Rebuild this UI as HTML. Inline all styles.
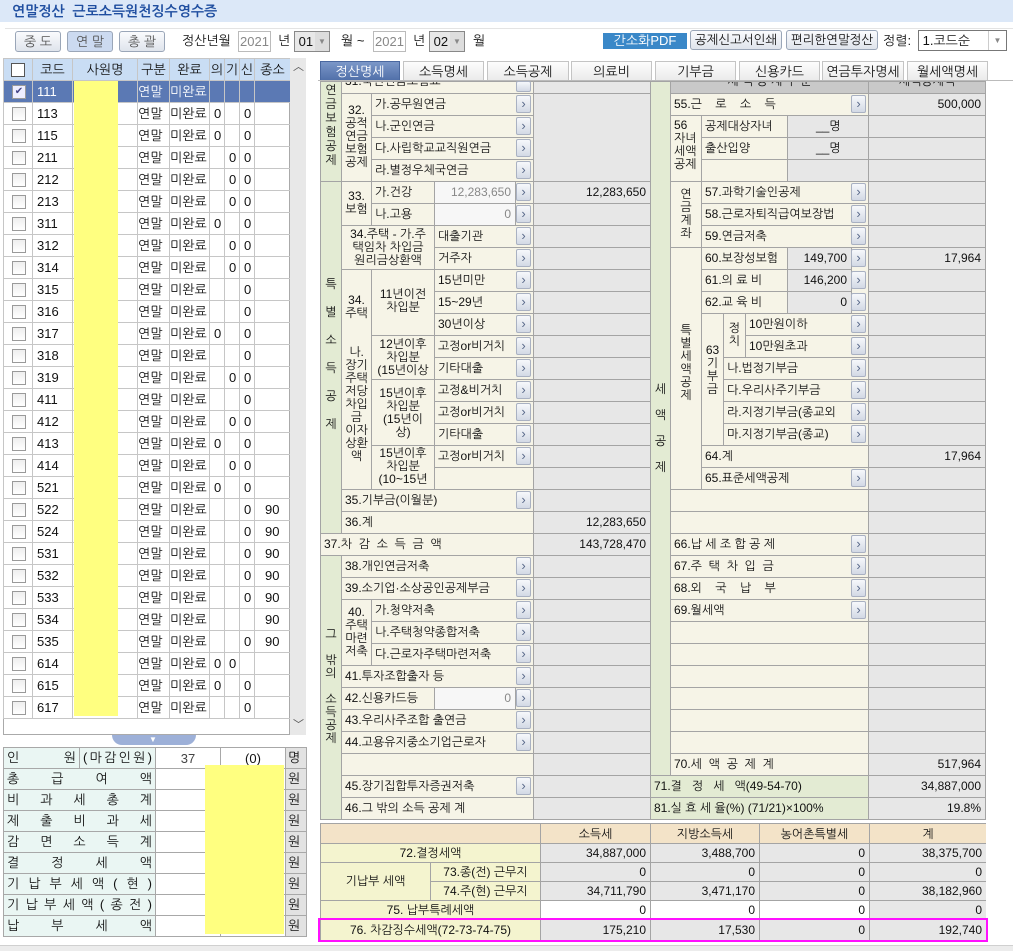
<!DOCTYPE html>
<html><head><meta charset="utf-8">
<style>
*{margin:0;padding:0}
body{width:1013px;height:950px;position:relative;overflow:hidden;background:#fff;font-family:"Liberation Sans","NanumGothic","Noto Sans CJK KR",sans-serif;font-size:12px;color:#111}
.a{position:absolute}
.c{position:absolute;box-sizing:border-box;border-left:1px solid #a4a4a4;border-top:1px solid #a4a4a4;overflow:hidden;white-space:nowrap;font-size:12px;line-height:20px;padding-left:3px}
.k{background:#f6f4e7}.g{background:#e7e7e7}.e{background:#e3ebd3}.w{background:#f7f7f7}.wh{background:#fff}
.r{text-align:right;padding-right:4px}
.v{line-height:13px;text-align:center;padding:0;white-space:normal}
.ct{text-align:center;padding:0}
.bt{position:absolute;width:15px;height:18px;box-sizing:border-box;border:1px solid #a9b1c2;border-radius:2px;background:linear-gradient(#f6f8fb,#d3d9e5);color:#5a6a8a;font-size:13px;line-height:16px;text-align:center}
.btn{position:absolute;box-sizing:border-box;border:1px solid #9aa6b8;border-radius:3px;background:linear-gradient(#fafbfd,#dfe4ec);text-align:center;font-size:13px;line-height:19px}
.tab{position:absolute;top:61px;height:20px;box-sizing:border-box;border:1px solid #c4c4c4;border-bottom:none;background:linear-gradient(#fdfdfd,#eaeaea);text-align:center;font-size:13px;line-height:19px}
table{border-collapse:collapse;table-layout:fixed}
.lg td{border:1px solid #c6c6c6;height:21px;font-size:13px;padding:0 0 0 4px;white-space:nowrap;overflow:hidden}
.cb{display:inline-block;width:12px;height:12px;border:1px solid #9a9a9a;background:linear-gradient(#eee,#fff);vertical-align:middle}
.sm td{border:1px solid #a8a8a8;height:20px;font-size:13px;padding:0 3px;white-space:nowrap}
.sp{display:flex;justify-content:space-between}
</style></head><body>
<!-- title -->
<div class="a" style="left:0;top:0;width:1013px;height:22px;background:#dce8f8"></div>
<div class="a" style="left:12px;top:3px;font-size:14px;font-weight:bold;color:#1f4ea0">연말정산 &nbsp;근로소득원천징수영수증</div>
<div class="a" style="left:5px;top:28px;width:1008px;height:1px;background:#e4e4e4"></div>
<!-- toolbar -->
<div class="btn" style="left:15px;top:31px;width:46px;height:21px;color:#555">중 도</div>
<div class="btn" style="left:67px;top:31px;width:46px;height:21px;background:#ccdaf0;color:#555">연 말</div>
<div class="btn" style="left:119px;top:31px;width:46px;height:21px;color:#555">총 괄</div>
<div class="a" style="left:182px;top:33px;font-size:13px">정산년월</div>
<div class="a" style="left:238px;top:31px;width:33px;height:21px;border:1px solid #bbb;box-sizing:border-box;color:#888;font-size:13px;line-height:19px;text-align:center">2021</div>
<div class="a" style="left:278px;top:33px;font-size:13px">년</div>
<div class="a" style="left:294px;top:31px;width:36px;height:21px;border:1px solid #888;box-sizing:border-box;background:#e8e8e8;font-size:13px;line-height:19px">&nbsp;01<span style="position:absolute;right:0;top:0;width:14px;height:19px;background:#ddd;color:#888;font-size:8px;text-align:center">▼</span></div>
<div class="a" style="left:341px;top:33px;font-size:13px">월 ~</div>
<div class="a" style="left:373px;top:31px;width:33px;height:21px;border:1px solid #bbb;box-sizing:border-box;color:#888;font-size:13px;line-height:19px;text-align:center">2021</div>
<div class="a" style="left:413px;top:33px;font-size:13px">년</div>
<div class="a" style="left:429px;top:31px;width:36px;height:21px;border:1px solid #888;box-sizing:border-box;background:#e8e8e8;font-size:13px;line-height:19px">&nbsp;02<span style="position:absolute;right:0;top:0;width:14px;height:19px;background:#ddd;color:#888;font-size:8px;text-align:center">▼</span></div>
<div class="a" style="left:473px;top:33px;font-size:13px">월</div>
<div class="a" style="left:603px;top:33px;width:84px;height:16px;background:#3a88c8;color:#fff;font-size:13px;line-height:16px;text-align:center">간소화PDF</div>
<div class="btn" style="left:690px;top:30px;width:92px;height:20px;font-size:12.5px;line-height:18px">공제신고서인쇄</div>
<div class="btn" style="left:786px;top:30px;width:92px;height:20px;font-size:12.5px;line-height:18px">편리한연말정산</div>
<div class="a" style="left:883px;top:33px;font-size:13px">정렬:</div>
<div class="a" style="left:918px;top:30px;width:89px;height:21px;border:1px solid #777;box-sizing:border-box;font-size:13px;line-height:19px;background:#fff">&nbsp;1.코드순<span style="position:absolute;right:0;top:0;width:17px;height:19px;border-left:1px solid #ccc;color:#888;font-size:8px;text-align:center">▼</span></div>

<!-- left grid -->
<div class="a" style="left:3px;top:58px;width:287px;height:677px;border:1px solid #aaa;box-sizing:border-box;background:#fff"></div>
<table class="a lg" style="left:3px;top:58px;width:287px">
<colgroup><col style="width:29px"><col style="width:40px"><col style="width:65px"><col style="width:32px"><col style="width:40px"><col style="width:15px"><col style="width:15px"><col style="width:15px"><col style="width:36px"></colgroup>
<tr style="background:#c9ddf4;text-align:center"><td style="padding:0"><span class="cb" style="background:#fff;border-color:#555"></span></td><td style="padding:0">코드</td><td style="padding:0">사원명</td><td style="padding:0">구분</td><td style="padding:0">완료</td><td style="padding:0">의</td><td style="padding:0">기</td><td style="padding:0">신</td><td style="padding:0">종소</td></tr>
<tr style="background:#5b79b4;color:#fff"><td style="padding:0 0 0 8px"><span class="cb" style="background:#eef;color:#448;font-size:10px;line-height:11px;text-align:center">✔</span></td><td>111</td><td style="padding:0"><div style="width:44px;height:21px;background:#ffff80;margin-left:1px"></div></td><td style="padding:0">연말</td><td style="padding:0">미완료</td><td></td><td></td><td></td><td></td></tr>
</table>
<div id="rows"></div>
<table class="a lg" style="left:3px;top:102px;width:287px">
<colgroup><col style="width:29px"><col style="width:40px"><col style="width:65px"><col style="width:32px"><col style="width:40px"><col style="width:15px"><col style="width:15px"><col style="width:15px"><col style="width:36px"></colgroup>
<tr><td style="padding-left:8px"><span class="cb"></span></td><td>113</td><td></td><td style="padding:0">연말</td><td style="padding:0">미완료</td><td>0</td><td></td><td>0</td><td></td></tr>
<tr><td style="padding-left:8px"><span class="cb"></span></td><td>115</td><td></td><td style="padding:0">연말</td><td style="padding:0">미완료</td><td>0</td><td></td><td>0</td><td></td></tr>
<tr><td style="padding-left:8px"><span class="cb"></span></td><td>211</td><td></td><td style="padding:0">연말</td><td style="padding:0">미완료</td><td></td><td>0</td><td>0</td><td></td></tr>
<tr><td style="padding-left:8px"><span class="cb"></span></td><td>212</td><td></td><td style="padding:0">연말</td><td style="padding:0">미완료</td><td></td><td>0</td><td>0</td><td></td></tr>
<tr><td style="padding-left:8px"><span class="cb"></span></td><td>213</td><td></td><td style="padding:0">연말</td><td style="padding:0">미완료</td><td></td><td>0</td><td>0</td><td></td></tr>
<tr><td style="padding-left:8px"><span class="cb"></span></td><td>311</td><td></td><td style="padding:0">연말</td><td style="padding:0">미완료</td><td>0</td><td></td><td>0</td><td></td></tr>
<tr><td style="padding-left:8px"><span class="cb"></span></td><td>312</td><td></td><td style="padding:0">연말</td><td style="padding:0">미완료</td><td></td><td>0</td><td>0</td><td></td></tr>
<tr><td style="padding-left:8px"><span class="cb"></span></td><td>314</td><td></td><td style="padding:0">연말</td><td style="padding:0">미완료</td><td></td><td>0</td><td>0</td><td></td></tr>
<tr><td style="padding-left:8px"><span class="cb"></span></td><td>315</td><td></td><td style="padding:0">연말</td><td style="padding:0">미완료</td><td></td><td></td><td>0</td><td></td></tr>
<tr><td style="padding-left:8px"><span class="cb"></span></td><td>316</td><td></td><td style="padding:0">연말</td><td style="padding:0">미완료</td><td></td><td></td><td>0</td><td></td></tr>
<tr><td style="padding-left:8px"><span class="cb"></span></td><td>317</td><td></td><td style="padding:0">연말</td><td style="padding:0">미완료</td><td>0</td><td></td><td>0</td><td></td></tr>
<tr><td style="padding-left:8px"><span class="cb"></span></td><td>318</td><td></td><td style="padding:0">연말</td><td style="padding:0">미완료</td><td></td><td></td><td>0</td><td></td></tr>
<tr><td style="padding-left:8px"><span class="cb"></span></td><td>319</td><td></td><td style="padding:0">연말</td><td style="padding:0">미완료</td><td></td><td>0</td><td>0</td><td></td></tr>
<tr><td style="padding-left:8px"><span class="cb"></span></td><td>411</td><td></td><td style="padding:0">연말</td><td style="padding:0">미완료</td><td></td><td></td><td>0</td><td></td></tr>
<tr><td style="padding-left:8px"><span class="cb"></span></td><td>412</td><td></td><td style="padding:0">연말</td><td style="padding:0">미완료</td><td></td><td>0</td><td>0</td><td></td></tr>
<tr><td style="padding-left:8px"><span class="cb"></span></td><td>413</td><td></td><td style="padding:0">연말</td><td style="padding:0">미완료</td><td>0</td><td></td><td>0</td><td></td></tr>
<tr><td style="padding-left:8px"><span class="cb"></span></td><td>414</td><td></td><td style="padding:0">연말</td><td style="padding:0">미완료</td><td></td><td>0</td><td>0</td><td></td></tr>
<tr><td style="padding-left:8px"><span class="cb"></span></td><td>521</td><td></td><td style="padding:0">연말</td><td style="padding:0">미완료</td><td>0</td><td></td><td>0</td><td></td></tr>
<tr><td style="padding-left:8px"><span class="cb"></span></td><td>522</td><td></td><td style="padding:0">연말</td><td style="padding:0">미완료</td><td></td><td></td><td>0</td><td style="padding-left:10px">90</td></tr>
<tr><td style="padding-left:8px"><span class="cb"></span></td><td>524</td><td></td><td style="padding:0">연말</td><td style="padding:0">미완료</td><td></td><td></td><td>0</td><td style="padding-left:10px">90</td></tr>
<tr><td style="padding-left:8px"><span class="cb"></span></td><td>531</td><td></td><td style="padding:0">연말</td><td style="padding:0">미완료</td><td></td><td></td><td>0</td><td style="padding-left:10px">90</td></tr>
<tr><td style="padding-left:8px"><span class="cb"></span></td><td>532</td><td></td><td style="padding:0">연말</td><td style="padding:0">미완료</td><td></td><td></td><td>0</td><td style="padding-left:10px">90</td></tr>
<tr><td style="padding-left:8px"><span class="cb"></span></td><td>533</td><td></td><td style="padding:0">연말</td><td style="padding:0">미완료</td><td></td><td></td><td>0</td><td style="padding-left:10px">90</td></tr>
<tr><td style="padding-left:8px"><span class="cb"></span></td><td>534</td><td></td><td style="padding:0">연말</td><td style="padding:0">미완료</td><td></td><td></td><td></td><td style="padding-left:10px">90</td></tr>
<tr><td style="padding-left:8px"><span class="cb"></span></td><td>535</td><td></td><td style="padding:0">연말</td><td style="padding:0">미완료</td><td></td><td></td><td>0</td><td style="padding-left:10px">90</td></tr>
<tr><td style="padding-left:8px"><span class="cb"></span></td><td>614</td><td></td><td style="padding:0">연말</td><td style="padding:0">미완료</td><td>0</td><td>0</td><td></td><td></td></tr>
<tr><td style="padding-left:8px"><span class="cb"></span></td><td>615</td><td></td><td style="padding:0">연말</td><td style="padding:0">미완료</td><td>0</td><td></td><td>0</td><td></td></tr>
<tr><td style="padding-left:8px"><span class="cb"></span></td><td>617</td><td></td><td style="padding:0">연말</td><td style="padding:0">미완료</td><td></td><td></td><td>0</td><td></td></tr>
</table>
<div class="a" style="left:74px;top:102px;width:44px;height:614px;background:#ffff80"></div>
<div class="a" style="left:290px;top:58px;width:16px;height:677px;background:#e8e8e8"></div>
<div class="a" style="left:293px;top:58px;font-size:11px;color:#555">︿</div>
<div class="a" style="left:293px;top:716px;font-size:11px;color:#555">﹀</div>
<div class="a" style="left:112px;top:735px;width:84px;height:10px;background:#9db0d8;border-radius:0 0 10px 10px"></div>
<div class="a" style="left:149px;top:735px;font-size:8px;color:#fff">▼</div>

<!-- summary -->
<table class="a sm" style="left:3px;top:747px;width:303px">
<colgroup><col style="width:76px"><col style="width:76px"><col style="width:65px"><col style="width:65px"><col style="width:21px"></colgroup>
<tr><td style="background:#eaf6f3"><div class="sp"><span>인</span><span>원</span></div></td><td style="background:#eaf6f3"><div class="sp"><span>(</span><span>마</span><span>감</span><span>인</span><span>원</span><span>)</span></div></td><td style="text-align:center;color:#444">37</td><td style="text-align:center">(0)</td><td style="background:#e2e2e2;padding:0 2px">명</td></tr>
<tr><td colspan="2" style="background:#eaf6f3"><div class="sp"><span>총</span><span>급</span><span>여</span><span>액</span></div></td><td></td><td></td><td style="background:#e2e2e2;padding:0 2px">원</td></tr>
<tr><td colspan="2" style="background:#eaf6f3"><div class="sp"><span>비</span><span>과</span><span>세</span><span>총</span><span>계</span></div></td><td></td><td></td><td style="background:#e2e2e2;padding:0 2px">원</td></tr>
<tr><td colspan="2" style="background:#eaf6f3"><div class="sp"><span>제</span><span>출</span><span>비</span><span>과</span><span>세</span></div></td><td></td><td></td><td style="background:#e2e2e2;padding:0 2px">원</td></tr>
<tr><td colspan="2" style="background:#eaf6f3"><div class="sp"><span>감</span><span>면</span><span>소</span><span>득</span><span>계</span></div></td><td></td><td></td><td style="background:#e2e2e2;padding:0 2px">원</td></tr>
<tr><td colspan="2" style="background:#eaf6f3"><div class="sp"><span>결</span><span>정</span><span>세</span><span>액</span></div></td><td></td><td></td><td style="background:#e2e2e2;padding:0 2px">원</td></tr>
<tr><td colspan="2" style="background:#eaf6f3"><div class="sp"><span>기</span><span>납</span><span>부</span><span>세</span><span>액</span><span>(</span><span>현</span><span>)</span></div></td><td></td><td></td><td style="background:#e2e2e2;padding:0 2px">원</td></tr>
<tr><td colspan="2" style="background:#eaf6f3"><div class="sp"><span>기</span><span>납</span><span>부</span><span>세</span><span>액</span><span>(</span><span>종</span><span>전</span><span>)</span></div></td><td></td><td></td><td style="background:#e2e2e2;padding:0 2px">원</td></tr>
<tr><td colspan="2" style="background:#eaf6f3"><div class="sp"><span>납</span><span>부</span><span>세</span><span>액</span></div></td><td></td><td></td><td style="background:#e2e2e2;padding:0 2px">원</td></tr>
</table>
<div class="a" style="left:205px;top:765px;width:79px;height:169px;background:#ffff80"></div>

<!-- tabs -->
<div class="tab" style="left:320px;width:80px;background:linear-gradient(#7b97c8,#4f6ea8);color:#fff;border-color:#4a68a0">정산명세</div>
<div class="tab" style="left:403px;width:81px">소득명세</div>
<div class="tab" style="left:487px;width:82px">소득공제</div>
<div class="tab" style="left:571px;width:81px">의료비</div>
<div class="tab" style="left:655px;width:81px">기부금</div>
<div class="tab" style="left:739px;width:81px">신용카드</div>
<div class="tab" style="left:822px;width:82px">연금투자명세</div>
<div class="tab" style="left:907px;width:81px">월세액명세</div>
<div class="a" style="left:318px;top:80px;width:695px;height:1px;background:#bbb"></div>

<!-- main form: frame -->
<div class="a" style="left:320px;top:81px;width:666px;height:739px;border-right:1px solid #a4a4a4;border-bottom:2px solid #a4a4a4;box-sizing:border-box"></div>

<!-- LEFT SIDE -->
<div class="c e v" style="left:320px;top:81px;width:21px;height:100px;line-height:14px;padding-top:1px">연<br>금<br>보<br>험<br>공<br>제</div>
<div class="c k" style="left:341px;top:81px;width:192px;height:12px"><div style="position:relative;top:-11px">31.국민연금보험료</div></div>
<div class="c g" style="left:533px;top:81px;width:117px;height:12px"></div>
<div class="c k v" style="left:341px;top:93px;width:30px;height:88px;line-height:13px;padding-top:10px">32.<br>공적<br>연금<br>보험<br>공제</div>
<div class="c k" style="left:371px;top:93px;width:162px;height:22px">가.공무원연금</div>
<div class="c k" style="left:371px;top:115px;width:162px;height:22px">나.군인연금</div>
<div class="c k" style="left:371px;top:137px;width:162px;height:22px">다.사립학교교직원연금</div>
<div class="c k" style="left:371px;top:159px;width:162px;height:22px">라.별정우체국연금</div>
<div class="c e v" style="left:320px;top:181px;width:21px;height:352px;line-height:28px;padding-top:88px">특<br>별<br>소<br>득<br>공<br>제</div>
<div class="c k v" style="left:341px;top:181px;width:30px;height:44px;padding-top:8px">33.<br>보험</div>
<div class="c k" style="left:371px;top:181px;width:63px;height:22px">가.건강</div>
<div class="c w r" style="left:434px;top:181px;width:81px;height:22px;color:#888">12,283,650</div>
<div class="c k" style="left:515px;top:181px;width:18px;height:22px"></div>
<div class="c k" style="left:371px;top:203px;width:63px;height:22px">나.고용</div>
<div class="c w r" style="left:434px;top:203px;width:81px;height:22px;color:#888">0</div>
<div class="c k" style="left:515px;top:203px;width:18px;height:22px"></div>
<div class="c k v" style="left:341px;top:225px;width:93px;height:44px;padding-top:2px">34.주택 - 가.주<br>택임차 차입금<br>원리금상환액</div>
<div class="c k" style="left:434px;top:225px;width:99px;height:22px">대출기관</div>
<div class="c k" style="left:434px;top:247px;width:99px;height:22px">거주자</div>
<div class="c k v" style="left:341px;top:269px;width:30px;height:220px;padding-top:24px">34.<br>주택<br><br><br>나.<br>장기<br>주택<br>저당<br>차입<br>금<br>이자<br>상환<br>액</div>
<div class="c k v" style="left:371px;top:269px;width:63px;height:66px;padding-top:18px">11년이전<br>차입분</div>
<div class="c k v" style="left:371px;top:335px;width:63px;height:44px;padding-top:2px">12년이후<br>차입분<br>(15년이상</div>
<div class="c k v" style="left:371px;top:379px;width:63px;height:66px;padding-top:7px">15년이후<br>차입분<br>(15년이<br>상)</div>
<div class="c k v" style="left:371px;top:445px;width:63px;height:44px;padding-top:1px">15년이후<br>차입분<br>(10~15년</div>
<div class="c k" style="left:434px;top:269px;width:99px;height:22px">15년미만</div>
<div class="c k" style="left:434px;top:291px;width:99px;height:22px">15~29년</div>
<div class="c k" style="left:434px;top:313px;width:99px;height:22px">30년이상</div>
<div class="c k" style="left:434px;top:335px;width:99px;height:22px">고정or비거치</div>
<div class="c k" style="left:434px;top:357px;width:99px;height:22px">기타대출</div>
<div class="c k" style="left:434px;top:379px;width:99px;height:22px">고정&amp;비거치</div>
<div class="c k" style="left:434px;top:401px;width:99px;height:22px">고정or비거치</div>
<div class="c k" style="left:434px;top:423px;width:99px;height:22px">기타대출</div>
<div class="c k" style="left:434px;top:445px;width:99px;height:22px">고정or비거치</div>
<div class="c k" style="left:434px;top:467px;width:99px;height:22px"></div>
<div class="c k" style="left:341px;top:489px;width:192px;height:22px">35.기부금(이월분)</div>
<div class="c k" style="left:341px;top:511px;width:192px;height:22px">36.계</div>
<div class="c k" style="left:320px;top:533px;width:213px;height:22px;letter-spacing:0">37.차 &nbsp;감 &nbsp;소 &nbsp;득 &nbsp;금 &nbsp;액</div>
<div class="c e v" style="left:320px;top:555px;width:21px;height:264px;padding-top:72px">그<br><br>밖<br>의<br><br>소<br>득<br>공<br>제</div>
<div class="c k" style="left:341px;top:555px;width:192px;height:22px">38.개인연금저축</div>
<div class="c k" style="left:341px;top:577px;width:192px;height:22px">39.소기업·소상공인공제부금</div>
<div class="c k v" style="left:341px;top:599px;width:30px;height:66px;padding-top:6px">40.<br>주택<br>마련<br>저축</div>
<div class="c k" style="left:371px;top:599px;width:162px;height:22px">가.청약저축</div>
<div class="c k" style="left:371px;top:621px;width:162px;height:22px">나.주택청약종합저축</div>
<div class="c k" style="left:371px;top:643px;width:162px;height:22px">다.근로자주택마련저축</div>
<div class="c k" style="left:341px;top:665px;width:192px;height:22px">41.투자조합출자 등</div>
<div class="c k" style="left:341px;top:687px;width:93px;height:22px">42.신용카드등</div>
<div class="c w r" style="left:434px;top:687px;width:81px;height:22px;color:#888">0</div>
<div class="c k" style="left:515px;top:687px;width:18px;height:22px"></div>
<div class="c k" style="left:341px;top:709px;width:192px;height:22px">43.우리사주조합 출연금</div>
<div class="c k" style="left:341px;top:731px;width:192px;height:22px">44.고용유지중소기업근로자</div>
<div class="c k" style="left:341px;top:753px;width:192px;height:22px"></div>
<div class="c k" style="left:341px;top:775px;width:192px;height:22px">45.장기집합투자증권저축</div>
<div class="c k" style="left:341px;top:797px;width:192px;height:22px">46.그 밖의 소득 공제 계</div>
<!-- left values -->
<div class="c g" style="left:533px;top:93px;width:117px;height:88px"></div>
<div class="c g r" style="left:533px;top:181px;width:117px;height:22px">12,283,650</div>
<div class="c g" style="left:533px;top:203px;width:117px;height:22px"></div>
<div class="c g" style="left:533px;top:225px;width:117px;height:22px"></div>
<div class="c g" style="left:533px;top:247px;width:117px;height:22px"></div>
<div class="c g" style="left:533px;top:269px;width:117px;height:22px"></div>
<div class="c g" style="left:533px;top:291px;width:117px;height:22px"></div>
<div class="c g" style="left:533px;top:313px;width:117px;height:22px"></div>
<div class="c g" style="left:533px;top:335px;width:117px;height:22px"></div>
<div class="c g" style="left:533px;top:357px;width:117px;height:22px"></div>
<div class="c g" style="left:533px;top:379px;width:117px;height:22px"></div>
<div class="c g" style="left:533px;top:401px;width:117px;height:22px"></div>
<div class="c g" style="left:533px;top:423px;width:117px;height:22px"></div>
<div class="c g" style="left:533px;top:445px;width:117px;height:22px"></div>
<div class="c g" style="left:533px;top:467px;width:117px;height:22px"></div>
<div class="c g" style="left:533px;top:489px;width:117px;height:22px"></div>
<div class="c g r" style="left:533px;top:511px;width:117px;height:22px">12,283,650</div>
<div class="c g r" style="left:533px;top:533px;width:117px;height:22px">143,728,470</div>
<div class="c g" style="left:533px;top:555px;width:117px;height:22px"></div>
<div class="c g" style="left:533px;top:577px;width:117px;height:22px"></div>
<div class="c g" style="left:533px;top:599px;width:117px;height:22px"></div>
<div class="c g" style="left:533px;top:621px;width:117px;height:22px"></div>
<div class="c g" style="left:533px;top:643px;width:117px;height:22px"></div>
<div class="c g" style="left:533px;top:665px;width:117px;height:22px"></div>
<div class="c g" style="left:533px;top:687px;width:117px;height:22px"></div>
<div class="c g" style="left:533px;top:709px;width:117px;height:22px"></div>
<div class="c g" style="left:533px;top:731px;width:117px;height:22px"></div>
<div class="c g" style="left:533px;top:753px;width:117px;height:22px"></div>
<div class="c g" style="left:533px;top:775px;width:117px;height:22px"></div>
<div class="c g" style="left:533px;top:797px;width:117px;height:22px"></div>
<!-- left buttons -->
<div class="bt" style="left:516px;top:81px;height:11px;line-height:9px"></div>
<div class="bt" style="left:516px;top:95px">›</div>
<div class="bt" style="left:516px;top:117px">›</div>
<div class="bt" style="left:516px;top:139px">›</div>
<div class="bt" style="left:516px;top:161px">›</div>
<div class="bt" style="left:516px;top:183px">›</div>
<div class="bt" style="left:516px;top:205px">›</div>
<div class="bt" style="left:516px;top:227px">›</div>
<div class="bt" style="left:516px;top:249px">›</div>
<div class="bt" style="left:516px;top:271px">›</div>
<div class="bt" style="left:516px;top:293px">›</div>
<div class="bt" style="left:516px;top:315px">›</div>
<div class="bt" style="left:516px;top:337px">›</div>
<div class="bt" style="left:516px;top:359px">›</div>
<div class="bt" style="left:516px;top:381px">›</div>
<div class="bt" style="left:516px;top:403px">›</div>
<div class="bt" style="left:516px;top:425px">›</div>
<div class="bt" style="left:516px;top:447px">›</div>
<div class="bt" style="left:516px;top:491px">›</div>
<div class="bt" style="left:516px;top:557px">›</div>
<div class="bt" style="left:516px;top:579px">›</div>
<div class="bt" style="left:516px;top:601px">›</div>
<div class="bt" style="left:516px;top:623px">›</div>
<div class="bt" style="left:516px;top:645px">›</div>
<div class="bt" style="left:516px;top:667px">›</div>
<div class="bt" style="left:516px;top:689px">›</div>
<div class="bt" style="left:516px;top:711px">›</div>
<div class="bt" style="left:516px;top:733px">›</div>
<div class="bt" style="left:516px;top:777px">›</div>

<!-- green strip -->
<div class="c e v" style="left:650px;top:81px;width:20px;height:694px;line-height:26px;padding-top:294px">세<br>액<br>공<br>제</div>

<!-- RIGHT SIDE -->
<div class="c ct" style="left:670px;top:81px;width:198px;height:12px;background:#c9c9c9"><div style="position:relative;top:-11px">세 액 공 제 구 분</div></div>
<div class="c ct" style="left:868px;top:81px;width:117px;height:12px;background:#c9c9c9"><div style="position:relative;top:-11px">세액공제액</div></div>
<div class="c k" style="left:670px;top:93px;width:198px;height:22px">55.근 &nbsp;&nbsp;&nbsp;로 &nbsp;&nbsp;&nbsp;소 &nbsp;&nbsp;&nbsp;득</div>
<div class="c k v" style="left:670px;top:115px;width:31px;height:66px;text-align:left;padding-left:3px;padding-top:3px">56<br>자녀<br>세액<br>공제</div>
<div class="c k" style="left:701px;top:115px;width:86px;height:22px">공제대상자녀</div>
<div class="c k" style="left:701px;top:137px;width:86px;height:22px">출산입양</div>
<div class="c k" style="left:701px;top:159px;width:86px;height:22px"></div>
<div class="c g" style="left:787px;top:115px;width:81px;height:22px;padding-left:28px">__명</div>
<div class="c g" style="left:787px;top:137px;width:81px;height:22px;padding-left:28px">__명</div>
<div class="c g" style="left:787px;top:159px;width:81px;height:22px"></div>
<div class="c k v" style="left:670px;top:181px;width:31px;height:66px;padding-top:6px">연<br>금<br>계<br>좌</div>
<div class="c k" style="left:701px;top:181px;width:167px;height:22px">57.과학기술인공제</div>
<div class="c k" style="left:701px;top:203px;width:167px;height:22px">58.근로자퇴직급여보장법</div>
<div class="c k" style="left:701px;top:225px;width:167px;height:22px">59.연금저축</div>
<div class="c k v" style="left:670px;top:247px;width:31px;height:242px;padding-top:76px">특<br>별<br>세<br>액<br>공<br>제</div>
<div class="c k" style="left:701px;top:247px;width:86px;height:22px">60.보장성보험</div>
<div class="c k" style="left:701px;top:269px;width:86px;height:22px">61.의 료 비</div>
<div class="c k" style="left:701px;top:291px;width:86px;height:22px">62.교 육 비</div>
<div class="c g r" style="left:787px;top:247px;width:64px;height:22px">149,700</div>
<div class="c g r" style="left:787px;top:269px;width:64px;height:22px">146,200</div>
<div class="c g r" style="left:787px;top:291px;width:64px;height:22px">0</div>
<div class="c k" style="left:851px;top:247px;width:17px;height:66px"></div>
<div class="c k v" style="left:701px;top:313px;width:22px;height:132px;padding-top:30px">63<br>기<br>부<br>금</div>
<div class="c k v" style="left:723px;top:313px;width:22px;height:44px;padding-top:8px">정<br>치</div>
<div class="c k" style="left:745px;top:313px;width:123px;height:22px">10만원이하</div>
<div class="c k" style="left:745px;top:335px;width:123px;height:22px">10만원초과</div>
<div class="c k" style="left:723px;top:357px;width:145px;height:22px">나.법정기부금</div>
<div class="c k" style="left:723px;top:379px;width:145px;height:22px">다.우리사주기부금</div>
<div class="c k" style="left:723px;top:401px;width:145px;height:22px">라.지정기부금(종교외</div>
<div class="c k" style="left:723px;top:423px;width:145px;height:22px">마.지정기부금(종교)</div>
<div class="c k" style="left:701px;top:445px;width:167px;height:22px">64.계</div>
<div class="c k" style="left:701px;top:467px;width:167px;height:22px">65.표준세액공제</div>
<div class="c k" style="left:670px;top:489px;width:198px;height:22px"></div>
<div class="c k" style="left:670px;top:511px;width:198px;height:22px"></div>
<div class="c k" style="left:670px;top:533px;width:198px;height:22px">66.납 세 조 합 공 제</div>
<div class="c k" style="left:670px;top:555px;width:198px;height:22px">67.주 &nbsp;택 &nbsp;차 &nbsp;입 &nbsp;금</div>
<div class="c k" style="left:670px;top:577px;width:198px;height:22px">68.외 &nbsp;&nbsp;&nbsp;국 &nbsp;&nbsp;&nbsp;납 &nbsp;&nbsp;&nbsp;부</div>
<div class="c k" style="left:670px;top:599px;width:198px;height:22px">69.월세액</div>
<div class="c k" style="left:670px;top:621px;width:198px;height:22px"></div>
<div class="c k" style="left:670px;top:643px;width:198px;height:22px"></div>
<div class="c k" style="left:670px;top:665px;width:198px;height:22px"></div>
<div class="c k" style="left:670px;top:687px;width:198px;height:22px"></div>
<div class="c k" style="left:670px;top:709px;width:198px;height:22px"></div>
<div class="c k" style="left:670px;top:731px;width:198px;height:22px"></div>
<div class="c k" style="left:670px;top:753px;width:198px;height:22px">70.세 &nbsp;액 &nbsp;공 &nbsp;제 &nbsp;계</div>
<div class="c e" style="left:650px;top:775px;width:218px;height:22px">71.결 &nbsp;&nbsp;정 &nbsp;&nbsp;세 &nbsp;&nbsp;액(49-54-70)</div>
<div class="c e" style="left:650px;top:797px;width:218px;height:22px">81.실 효 세 율(%) (71/21)×100%</div>
<!-- right values -->
<div class="c g r" style="left:868px;top:93px;width:117px;height:22px">500,000</div>
<div class="c g" style="left:868px;top:115px;width:117px;height:22px"></div>
<div class="c g" style="left:868px;top:137px;width:117px;height:22px"></div>
<div class="c g" style="left:868px;top:159px;width:117px;height:22px"></div>
<div class="c g" style="left:868px;top:181px;width:117px;height:22px"></div>
<div class="c g" style="left:868px;top:203px;width:117px;height:22px"></div>
<div class="c g" style="left:868px;top:225px;width:117px;height:22px"></div>
<div class="c g r" style="left:868px;top:247px;width:117px;height:22px">17,964</div>
<div class="c g" style="left:868px;top:269px;width:117px;height:22px"></div>
<div class="c g" style="left:868px;top:291px;width:117px;height:22px"></div>
<div class="c g" style="left:868px;top:313px;width:117px;height:22px"></div>
<div class="c g" style="left:868px;top:335px;width:117px;height:22px"></div>
<div class="c g" style="left:868px;top:357px;width:117px;height:22px"></div>
<div class="c g" style="left:868px;top:379px;width:117px;height:22px"></div>
<div class="c g" style="left:868px;top:401px;width:117px;height:22px"></div>
<div class="c g" style="left:868px;top:423px;width:117px;height:22px"></div>
<div class="c g r" style="left:868px;top:445px;width:117px;height:22px">17,964</div>
<div class="c g" style="left:868px;top:467px;width:117px;height:22px"></div>
<div class="c g" style="left:868px;top:489px;width:117px;height:22px"></div>
<div class="c g" style="left:868px;top:511px;width:117px;height:22px"></div>
<div class="c g" style="left:868px;top:533px;width:117px;height:22px"></div>
<div class="c g" style="left:868px;top:555px;width:117px;height:22px"></div>
<div class="c g" style="left:868px;top:577px;width:117px;height:22px"></div>
<div class="c g" style="left:868px;top:599px;width:117px;height:22px"></div>
<div class="c g" style="left:868px;top:621px;width:117px;height:22px"></div>
<div class="c g" style="left:868px;top:643px;width:117px;height:22px"></div>
<div class="c g" style="left:868px;top:665px;width:117px;height:22px"></div>
<div class="c g" style="left:868px;top:687px;width:117px;height:22px"></div>
<div class="c g" style="left:868px;top:709px;width:117px;height:22px"></div>
<div class="c g" style="left:868px;top:731px;width:117px;height:22px"></div>
<div class="c g r" style="left:868px;top:753px;width:117px;height:22px">517,964</div>
<div class="c g r" style="left:868px;top:775px;width:117px;height:22px">34,887,000</div>
<div class="c g r" style="left:868px;top:797px;width:117px;height:22px">19.8%</div>
<!-- right buttons -->
<div class="bt" style="left:851px;top:95px">›</div>
<div class="bt" style="left:851px;top:183px">›</div>
<div class="bt" style="left:851px;top:205px">›</div>
<div class="bt" style="left:851px;top:227px">›</div>
<div class="bt" style="left:851px;top:249px">›</div>
<div class="bt" style="left:851px;top:271px">›</div>
<div class="bt" style="left:851px;top:293px">›</div>
<div class="bt" style="left:851px;top:315px">›</div>
<div class="bt" style="left:851px;top:337px">›</div>
<div class="bt" style="left:851px;top:359px">›</div>
<div class="bt" style="left:851px;top:381px">›</div>
<div class="bt" style="left:851px;top:403px">›</div>
<div class="bt" style="left:851px;top:425px">›</div>
<div class="bt" style="left:851px;top:469px">›</div>
<div class="bt" style="left:851px;top:535px">›</div>
<div class="bt" style="left:851px;top:557px">›</div>
<div class="bt" style="left:851px;top:579px">›</div>
<div class="bt" style="left:851px;top:601px">›</div>

<!-- bottom table -->
<div class="a" style="left:320px;top:823px;width:666px;height:117px;border-right:1px solid #a4a4a4;border-bottom:1px solid #a4a4a4;box-sizing:border-box"></div>
<div class="c" style="left:320px;top:823px;width:220px;height:20px;background:#f3e3c8"></div>
<div class="c ct" style="left:540px;top:823px;width:110px;height:20px;background:#f3e3c8">소득세</div>
<div class="c ct" style="left:650px;top:823px;width:109px;height:20px;background:#f3e3c8">지방소득세</div>
<div class="c ct" style="left:759px;top:823px;width:110px;height:20px;background:#f3e3c8">농어촌특별세</div>
<div class="c ct" style="left:869px;top:823px;width:117px;height:20px;background:#f3e3c8">계</div>
<div class="c ct" style="left:320px;top:843px;width:220px;height:19px;background:#f4f4cf;line-height:18px">72.결정세액</div>
<div class="c ct" style="left:320px;top:862px;width:110px;height:38px;background:#f4f4cf;line-height:36px">기납부 세액</div>
<div class="c ct" style="left:430px;top:862px;width:110px;height:19px;background:#f4f4cf;line-height:18px">73.종(전) 근무지</div>
<div class="c ct" style="left:430px;top:881px;width:110px;height:19px;background:#f4f4cf;line-height:18px">74.주(현) 근무지</div>
<div class="c ct" style="left:320px;top:900px;width:220px;height:19px;background:#f4f4cf;line-height:18px">75. 납부특례세액</div>
<div class="c ct" style="left:320px;top:919px;width:220px;height:21px;background:#f4f4cf">76. 차감징수세액(72-73-74-75)</div>
<div class="c g r" style="left:540px;top:843px;width:110px;height:19px;line-height:18px">34,887,000</div>
<div class="c g r" style="left:650px;top:843px;width:109px;height:19px;line-height:18px">3,488,700</div>
<div class="c g r" style="left:759px;top:843px;width:110px;height:19px;line-height:18px">0</div>
<div class="c g r" style="left:869px;top:843px;width:117px;height:19px;line-height:18px">38,375,700</div>
<div class="c g r" style="left:540px;top:862px;width:110px;height:19px;line-height:18px">0</div>
<div class="c g r" style="left:650px;top:862px;width:109px;height:19px;line-height:18px">0</div>
<div class="c g r" style="left:759px;top:862px;width:110px;height:19px;line-height:18px">0</div>
<div class="c g r" style="left:869px;top:862px;width:117px;height:19px;line-height:18px">0</div>
<div class="c g r" style="left:540px;top:881px;width:110px;height:19px;line-height:18px">34,711,790</div>
<div class="c g r" style="left:650px;top:881px;width:109px;height:19px;line-height:18px">3,471,170</div>
<div class="c g r" style="left:759px;top:881px;width:110px;height:19px;line-height:18px">0</div>
<div class="c g r" style="left:869px;top:881px;width:117px;height:19px;line-height:18px">38,182,960</div>
<div class="c wh r" style="left:540px;top:900px;width:110px;height:19px;line-height:18px">0</div>
<div class="c wh r" style="left:650px;top:900px;width:109px;height:19px;line-height:18px">0</div>
<div class="c wh r" style="left:759px;top:900px;width:110px;height:19px;line-height:18px">0</div>
<div class="c g r" style="left:869px;top:900px;width:117px;height:19px;line-height:18px">0</div>
<div class="c g r" style="left:540px;top:919px;width:110px;height:21px">175,210</div>
<div class="c g r" style="left:650px;top:919px;width:109px;height:21px">17,530</div>
<div class="c g r" style="left:759px;top:919px;width:110px;height:21px">0</div>
<div class="c g r" style="left:869px;top:919px;width:117px;height:21px">192,740</div>
<div class="a" style="left:318px;top:918px;width:670px;height:24px;border:2px solid #ff10ff;box-sizing:border-box"></div>
<div class="a" style="left:0;top:945px;width:1013px;height:5px;background:#ececec;border-top:1px solid #d0d0d0"></div>
</body></html>
